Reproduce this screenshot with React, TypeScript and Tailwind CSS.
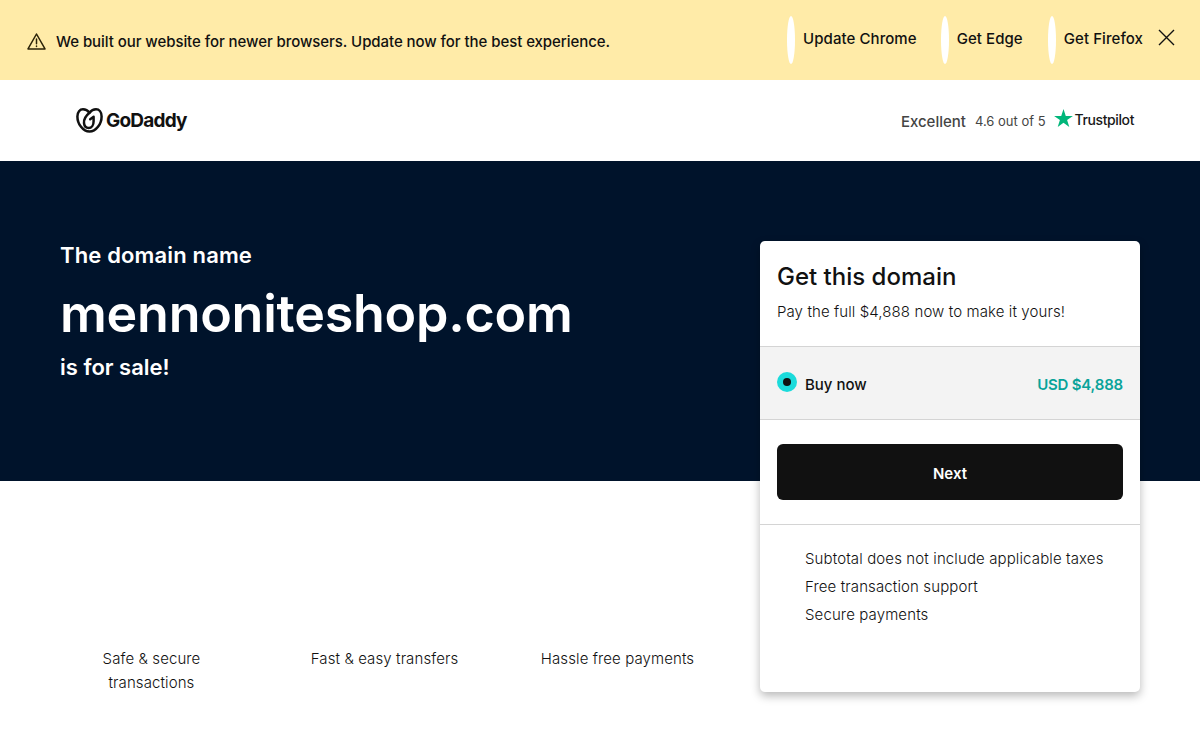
import React from "react";

const font = "font-['Inter','Noto_Sans',sans-serif]";

function Heart() {
  return (
    <svg width="27" height="25" viewBox="0 0 27 25" fill="none" stroke="#111" strokeWidth="2.5" strokeLinecap="round" strokeLinejoin="round">
      <path d="M13.5 23.6C7 23.6 1.4 16 1.4 8.4 1.4 4 3.9 1.3 7 1.3c2.8 0 5 1.5 6.5 3.5C15 2.8 17.2 1.3 20 1.3c3.1 0 5.6 2.7 5.6 7.1 0 7.6-5.6 15.2-12.1 15.2z" />
      <path d="M13.5 4.8C9.6 8 7.6 11.4 8 15.2c.3 2.8 2.2 4.8 4.6 4.8 3 0 5-3 5-6.8V8.8l-3.4 2.4" />
    </svg>
  );
}

function BrowserLink({ label }: { label: string }) {
  return (
    <div className="flex items-center gap-2">
      <div className="w-2 h-12 bg-white rounded-[50%]" />
      <span className="text-[15px] font-medium tracking-[0.07px] text-[#111] whitespace-nowrap mt-[-2px]">{label}</span>
    </div>
  );
}

export default function App() {
  return (
    <div className={`${font} w-[1200px] h-[740px] overflow-hidden bg-white text-[#111]`}>
      <div className="h-20 bg-[#ffeba8] flex items-center justify-between pl-[27px] pr-[25px]">
        <div className="flex items-center gap-[10px] pt-[3px]">
          <svg width="19" height="17" viewBox="0 0 19 17" fill="none" stroke="#2b2308" strokeWidth="1.5" strokeLinejoin="round" strokeLinecap="round">
            <path d="M9.5 1 1 15.9h17L9.5 1z" />
            <path d="M9.5 6v4.8M9.5 13v.4" />
          </svg>
          <span className="text-[15px] font-medium tracking-[-0.065px] text-[#111] mt-[2px]">We built our website for newer browsers. Update now for the best experience.</span>
        </div>
        <div className="flex items-center">
          <BrowserLink label="Update Chrome" />
          <div className="w-6" />
          <BrowserLink label="Get Edge" />
          <div className="w-[25px]" />
          <BrowserLink label="Get Firefox" />
          <svg className="ml-[15px] mb-[6px]" width="17" height="17" viewBox="0 0 17 17" fill="none" stroke="#111" strokeWidth="1.4">
            <path d="M1 1l15 15M16 1 1 16" />
          </svg>
        </div>
      </div>

      <div className="h-[81px] flex items-center justify-between pl-[76px] pr-[66px]">
        <div className="flex items-center gap-[3px]">
          <Heart />
          <span className="text-[19px] font-bold tracking-[-0.8px] text-[#111] mt-[2px]">GoDaddy</span>
        </div>
        <div className="flex items-center">
          <span className="text-[15px] font-medium text-[#444] mt-[3px]">Excellent</span>
          <span className="ml-[9px] text-[13px] text-[#444] mt-[3px]">4.6 out of 5</span>
          <svg className="ml-[8px] mr-[2px] mb-[6px]" width="19" height="18" viewBox="0 0 24 23" fill="#00b67a">
            <path d="M12 0l2.9 8.8H24l-7.4 5.4 2.8 8.8L12 17.6 4.6 23l2.8-8.8L0 8.8h9.1z" />
          </svg>
          <span className="text-[14px] font-medium tracking-[-0.4px] text-[#191919] mb-[2px]">Trustpilot</span>
        </div>
      </div>

      <div className="h-[320px] bg-[#00132b] flex justify-between pl-[60px] pr-[60px] pt-20">
        <div className="text-white">
          <div className="text-[22px] leading-[30px] font-semibold tracking-[0.15px] mt-[-1px]">The domain name</div>
          <div className="text-[52px] leading-[68px] font-semibold tracking-[-0.25px] mt-[10px]">mennoniteshop.com</div>
          <div className="text-[22px] leading-[30px] font-semibold mt-[4px]">is for sale!</div>
        </div>
        <div className="w-[380px] h-[451px] shrink-0 bg-white rounded-[5px] shadow-[0_4px_10px_rgba(0,0,0,0.28)] flex flex-col">
          <div className="h-[106px] border-b border-[#d4d4d4] px-[17px] pt-[19px]">
            <div className="text-[24px] leading-[34px] font-medium text-[#111]">Get this domain</div>
            <div className="text-[15px] leading-[24px] font-light tracking-[0.1px] text-[#111] mt-[6px]">Pay the full $4,888 now to make it yours!</div>
          </div>
          <div className="h-[73px] bg-[#f3f3f3] border-b border-[#d4d4d4] flex items-center justify-between px-[17px]">
            <div className="flex items-center gap-2">
              <div className="w-5 h-5 rounded-full bg-[#1bdbdb] flex items-center justify-center mb-[2px]">
                <div className="w-2 h-2 rounded-full bg-[#111]" />
              </div>
              <span className="text-[15px] font-medium text-[#111] mt-[4px]">Buy now</span>
            </div>
            <span className="text-[15px] font-semibold tracking-[-0.2px] text-[#09a39a] mt-[4px]">USD $4,888</span>
          </div>
          <div className="h-[105px] border-b border-[#d4d4d4] px-[17px] pt-6">
            <div className="h-14 bg-[#111] rounded-[6px] flex items-center justify-center text-white text-[15px] font-semibold pt-[5px]">Next</div>
          </div>
          <div className="pl-[45px] pt-[22px] flex flex-col gap-1 text-[15px] leading-6 font-light tracking-[0.12px] text-[#111]">
            <div>Subtotal does not include applicable taxes</div>
            <div>Free transaction support</div>
            <div>Secure payments</div>
          </div>
        </div>
      </div>

      <div className="pl-[35px] pt-[166px] grid grid-cols-[233px_233px_233px] w-[760px] text-[15px] leading-6 font-light tracking-[0.1px] text-[#111] text-center">
        <div className="px-[50px]">Safe &amp; secure transactions</div>
        <div>Fast &amp; easy transfers</div>
        <div>Hassle free payments</div>
      </div>
    </div>
  );
}
